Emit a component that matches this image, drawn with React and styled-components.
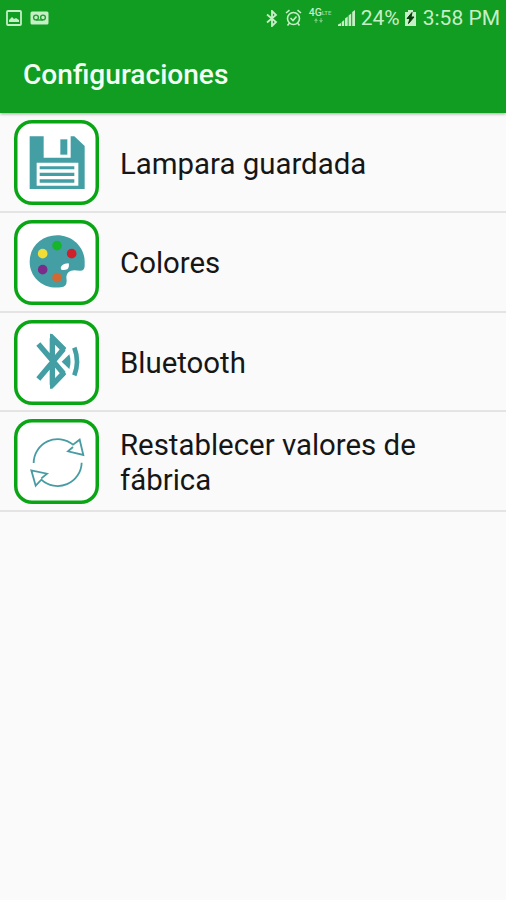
import styled, { createGlobalStyle } from "styled-components";

const GlobalStyle = createGlobalStyle`
body {
  margin: 0;
  background: #fafafa;
  font-family: Roboto, "Noto Sans", sans-serif;
}
`;

const Screen = styled.div`
min-height: 900px;
background: #fafafa;
overflow: hidden;
`;

const TopBar = styled.header`
height: 113px;
background: #119c22;
box-shadow: 0 1px 3px rgba(0, 0, 0, 0.35);
`;

const StatusBar = styled.div`
display: flex;
justify-content: space-between;
height: 36px;
padding: 0 6px;
color: #c6efc6;
`;

const StatusGroup = styled.div`
display: flex;
align-items: center;
`;

const StatusIcon = styled.svg`
display: block;
flex: none;
margin-left: ${props => props.$gap || 0}px;
`;

const Network = styled.div`
display: flex;
flex-direction: column;
width: 23px;
height: 22px;
margin-left: 7px;
font-size: 10.5px;
font-weight: 500;
line-height: 11px;
`;

const NetworkTop = styled.div`
display: flex;
align-items: center;
white-space: nowrap;
`;

const Carrier = styled.span`
font-size: 6px;
opacity: 0.75;
`;

const Arrows = styled.svg`
display: block;
margin-left: 5px;
opacity: 0.55;
`;

const StatusText = styled.span`
font-size: 21px;
line-height: 36px;
margin-left: ${props => props.$gap || 0}px;
white-space: nowrap;
`;

const Title = styled.h1`
margin: 0;
padding: 21px 0 0 23px;
font-size: 28.1px;
font-weight: 500;
line-height: 36px;
color: #f4fff4;
`;

const List = styled.ul`
margin: 0;
padding: 0;
list-style: none;
`;

const Row = styled.li`
display: flex;
align-items: center;
box-sizing: border-box;
height: 99.8px;
padding: 1.4px 60px 0 14px;
border-bottom: 2px solid #e4e4e4;
`;

const Tile = styled.div`
display: flex;
align-items: center;
justify-content: center;
flex: none;
width: 85px;
height: 85px;
border-radius: 18px;
background: #fff;
box-shadow: inset 0 0 0 3.5px #09a514;
`;

const Label = styled.span`
margin: 3px 0 0 21px;
font-size: 29.4px;
line-height: 35px;
color: #161616;
`;

const TileIcon = styled.svg`
display: block;
width: 60px;
height: 60px;
`;

const teal = "#449fa5";

const SaveIcon = () => (
  <TileIcon viewBox="0 0 180 180">
    <path fill={teal} d="M8 10H50V74H131V10H142L173 39V168H8Z" />
    <path fill={teal} d="M100 19H121V65H100Z" />
    <path fill="#fff" d="M29 89H154V158H29Z" />
    <path fill={teal} d="M38 100H142V109H38ZM38 119H142V129H38ZM38 139H142V149H38Z" />
  </TileIcon>
);

const PaletteIcon = () => (
  <TileIcon viewBox="0 0 180 180">
    <path
      fill={teal}
      d="M90 10C139 10 173 48 173 88V101Q173 117 158 116L142 115Q120 116 118 134L119 147Q119 164 102 166C48 173 8 136 8 89C8 43 45 10 90 10Z"
    />
    <path fill="#fff" d="M103 103Q109 94 125 94Q128 105 121 112Q112 115 103 113Q99 108 103 103Z" />
    <circle cx="90" cy="41" r="14.5" fill="#16b52a" />
    <circle cx="47" cy="65" r="14.5" fill="#f2dd36" />
    <circle cx="134" cy="65" r="14.5" fill="#cf202b" />
    <circle cx="47" cy="113" r="14.5" fill="#7b2c8b" />
    <circle cx="90" cy="137" r="14.5" fill="#d06a32" />
  </TileIcon>
);

const BluetoothIcon = () => (
  <TileIcon viewBox="0 0 180 180">
    <path
      fill="none"
      stroke={teal}
      strokeWidth="16"
      strokeLinejoin="bevel"
      d="M34 36L109 124L76 158V19L109 52L34 141"
    />
    <path fill={teal} d="M69 5L76 6L118 48L108 59L82 31V148L108 118L118 126L76 170H69Z" />
    <path fill={teal} d="M104 89L127 67Q134 89 127 111Z" />
    <path fill="none" stroke={teal} strokeWidth="14" d="M142 47Q158 89 142 130" />
  </TileIcon>
);

const ResetIcon = () => (
  <TileIcon viewBox="0 0 180 180" fill="none" stroke="#479ca3" strokeWidth="5.4">
    <path d="M20 93A72 72 0 0 1 138 38L158 23L169 69L123 58L138 45" />
    <path d="M164 92A72 72 0 0 1 43 143L26 161L13 115L60 125L43 139" />
  </TileIcon>
);

const items = [
  { text: "Lampara guardada", Icon: SaveIcon },
  { text: "Colores", Icon: PaletteIcon },
  { text: "Bluetooth", Icon: BluetoothIcon },
  { text: "Restablecer valores de fábrica", Icon: ResetIcon },
];

const App = () => {
  return (
    <Screen>
      <GlobalStyle />
      <TopBar>
        <StatusBar>
          <StatusGroup>
            <StatusIcon width="16" height="16" viewBox="0 0 16 16">
              <rect x="1" y="1" width="14" height="14" rx="1" fill="none" stroke="currentColor" strokeWidth="1.8" />
              <path d="M3 12V10L6 7L8 9L10 8L13 10V12Z" fill="currentColor" />
            </StatusIcon>
            <StatusIcon $gap={8} width="19" height="14" viewBox="0 0 19 14">
              <rect x="0.5" y="0.5" width="18" height="13" rx="1.5" fill="currentColor" />
              <g fill="none" stroke="#219f30" strokeWidth="1.4">
                <circle cx="6" cy="6.5" r="2.4" />
                <circle cx="13" cy="6.5" r="2.4" />
                <path d="M6 9H13" />
              </g>
            </StatusIcon>
          </StatusGroup>
          <StatusGroup>
            <StatusIcon width="12" height="17" viewBox="0 0 12 17">
              <path
                d="M1 4.5L10 12L6 16V1L10 5L1 12.5"
                fill="none"
                stroke="currentColor"
                strokeWidth="1.8"
              />
            </StatusIcon>
            <StatusIcon $gap={7} width="17" height="18" viewBox="0 0 17 18">
              <g fill="none" stroke="currentColor" strokeWidth="1.6">
                <circle cx="8.5" cy="9.5" r="6" />
                <path d="M5.5 9L8 11.5L11.5 7.5" />
                <path d="M1 4L4.5 1.2M16 4L12.5 1.2M4.5 14L2.5 16.5M12.5 14L14.5 16.5" />
              </g>
            </StatusIcon>
            <Network>
              <NetworkTop>
                4G<Carrier>LTE</Carrier>
              </NetworkTop>
              <Arrows width="10" height="6" viewBox="0 0 10 6">
                <path d="M0 3L2 0L4 3ZM1.5 3H2.5V5H1.5ZM5 2L7 5L9 2ZM6.5 0H7.5V2H6.5Z" fill="currentColor" />
              </Arrows>
            </Network>
            <StatusIcon $gap={6} width="18" height="17" viewBox="0 0 18 17">
              <path d="M0 14.5L3 13V16H0ZM3.7 12L6.2 10V16H3.7ZM7 8.5L9.7 6.5V16H7ZM10.6 5.5L13.2 3.5V16H10.6ZM14.2 2L17 0V16H14.2Z" fill="currentColor" />
            </StatusIcon>
            <StatusText $gap={5}>24%</StatusText>
            <StatusIcon $gap={5} width="11" height="16" viewBox="0 0 11 16">
              <path d="M3 0H8V2H11V16H0V2H3Z" fill="currentColor" />
              <path d="M7 2.5L2 8.5H5L3.5 13.5L9 7H6Z" fill="#073c0b" stroke="#073c0b" />
            </StatusIcon>
            <StatusText $gap={7}>3:58 PM</StatusText>
          </StatusGroup>
        </StatusBar>
        <Title>Configuraciones</Title>
      </TopBar>
      <List>
        {items.map(({ text, Icon }) => (
          <Row key={text}>
            <Tile>
              <Icon />
            </Tile>
            <Label>{text}</Label>
          </Row>
        ))}
      </List>
    </Screen>
  );
};

export default App;
